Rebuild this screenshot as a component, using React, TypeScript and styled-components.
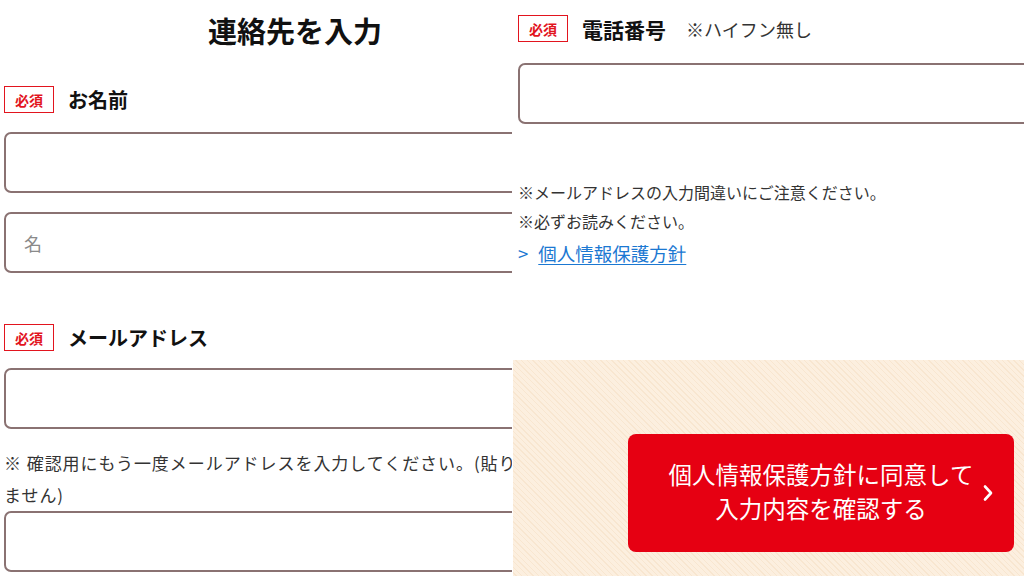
import React from 'react';
import styled, { createGlobalStyle } from 'styled-components';

const GlobalStyle = createGlobalStyle`
  html, body {
    margin: 0;
    padding: 0;
    background: #fff;
  }
  body {
    font-family: "Noto Sans CJK JP", "Noto Sans", sans-serif;
    color: #222;
  }
`;

const colors = {
  red: '#e2141e',
  button: '#e60012',
  border: '#8a7272',
  note: '#333',
  link: '#1b78d2',
  beige: '#fcefdf',
  stripe: '#f8e6d0',
};

const Split = styled.main`
  display: grid;
  grid-template-columns: 512px 512px;
  width: 1024px;
  height: 576px;
  overflow: hidden;
`;

const Panel = styled.section`
  overflow: hidden;
  height: 576px;
  background: #fff;
`;

const Sheet = styled.div<{ $pad: string }>`
  width: 600px;
  padding: ${(p) => p.$pad};
  box-sizing: border-box;
`;

const Title = styled.h1`
  margin: 0;
  width: 582px;
  height: 60px;
  line-height: 60px;
  text-align: center;
  font-size: 29px;
  font-weight: 700;
  color: #111;
`;

const FieldLabel = styled.div<{ $top: number }>`
  display: flex;
  align-items: center;
  gap: 14px;
  margin-top: ${(p) => p.$top}px;
  height: 27px;
`;

const Badge = styled.span`
  display: inline-flex;
  align-items: center;
  justify-content: center;
  box-sizing: border-box;
  width: 50px;
  height: 27px;
  border: 1.5px solid ${colors.red};
  color: ${colors.red};
  font-size: 14px;
  font-weight: 700;
`;

const LabelText = styled.span<{ $size?: number }>`
  font-size: ${(p) => p.$size ?? 20}px;
  font-weight: 700;
  color: #111;
`;

const Hint = styled.span`
  margin-left: 6px;
  font-size: 18px;
  color: ${colors.note};
`;

const TextInput = styled.input<{ $top: number }>`
  display: block;
  box-sizing: border-box;
  width: 580px;
  height: 61px;
  margin-top: ${(p) => p.$top}px;
  padding: 0 18px;
  border: 2px solid ${colors.border};
  border-radius: 7px;
  background: #fff;
  font-family: inherit;
  font-size: 18px;
  outline: none;

  &::placeholder {
    color: #8a8a8a;
  }
`;

const Note = styled.p`
  margin: 18px 0 0;
  white-space: nowrap;
  font-size: 17px;
  letter-spacing: 0.95px;
  line-height: 32px;
  color: ${colors.note};
`;

const Notes = styled.div`
  margin-top: 54px;
  font-size: 16px;
  line-height: 29px;
  color: ${colors.note};

  p {
    margin: 0;
  }
`;

const PolicyLink = styled.a`
  display: flex;
  align-items: center;
  gap: 10px;
  margin-top: 2px;
  font-size: 18.5px;
  line-height: 30px;
  color: ${colors.link};
  text-decoration: none;

  span:last-child {
    text-decoration: underline;
    text-underline-offset: 3px;
  }
`;

const SubmitBand = styled.div`
  margin: 92px 0 0 1px;
  width: 616px;
  height: 240px;
  padding-top: 74px;
  box-sizing: border-box;
  display: flex;
  justify-content: center;
  align-items: flex-start;
  background-color: ${colors.beige};
  background-image: repeating-linear-gradient(
    45deg,
    transparent 0,
    transparent 3px,
    ${colors.stripe} 3px,
    ${colors.stripe} 4px
  );
`;

const SubmitButton = styled.button`
  position: relative;
  width: 386px;
  height: 118px;
  padding: 0 0 4px;
  border: none;
  border-radius: 8px;
  background: ${colors.button};
  color: #fff;
  font-family: inherit;
  font-size: 23.5px;
  line-height: 34px;
  font-weight: 400;
  text-align: center;
  cursor: pointer;

  svg {
    position: absolute;
    right: 20px;
    top: 50%;
    transform: translateY(-50%);
  }
`;

const Chevron = () => (
  <svg width="12" height="18" viewBox="0 0 12 18" fill="none">
    <path d="M3 2.5 L9 9 L3 15.5" stroke="#fff" strokeWidth="2.6" strokeLinecap="round" strokeLinejoin="round" />
  </svg>
);

export default function App() {
  return (
    <>
      <GlobalStyle />
      <Split>
        <Panel>
          <Sheet $pad="0 0 0 4px">
            <Title>連絡先を入力</Title>

            <FieldLabel $top={26}>
              <Badge>必須</Badge>
              <LabelText>お名前</LabelText>
            </FieldLabel>
            <TextInput $top={19} />
            <TextInput $top={19} placeholder="名" />

            <FieldLabel $top={51}>
              <Badge>必須</Badge>
              <LabelText>メールアドレス</LabelText>
            </FieldLabel>
            <TextInput $top={17} />
            <Note>
              ※ 確認用にもう一度メールアドレスを入力してください。(貼り付けはでき
              <br />
              ません)
            </Note>
            <TextInput $top={0} />
          </Sheet>
        </Panel>

        <Panel>
          <Sheet $pad="15px 0 0 6px">
            <FieldLabel $top={0}>
              <Badge>必須</Badge>
              <LabelText $size={21}>電話番号</LabelText>
              <Hint>※ハイフン無し</Hint>
            </FieldLabel>
            <TextInput $top={21} />

            <Notes>
              <p>※メールアドレスの入力間違いにご注意ください。</p>
              <p>※必ずお読みください。</p>
              <PolicyLink href="#">
                <span>&gt;</span>
                <span>個人情報保護方針</span>
              </PolicyLink>
            </Notes>
          </Sheet>

          <SubmitBand>
            <SubmitButton>
              個人情報保護方針に同意して
              <br />
              入力内容を確認する
              <Chevron />
            </SubmitButton>
          </SubmitBand>
        </Panel>
      </Split>
    </>
  );
}
